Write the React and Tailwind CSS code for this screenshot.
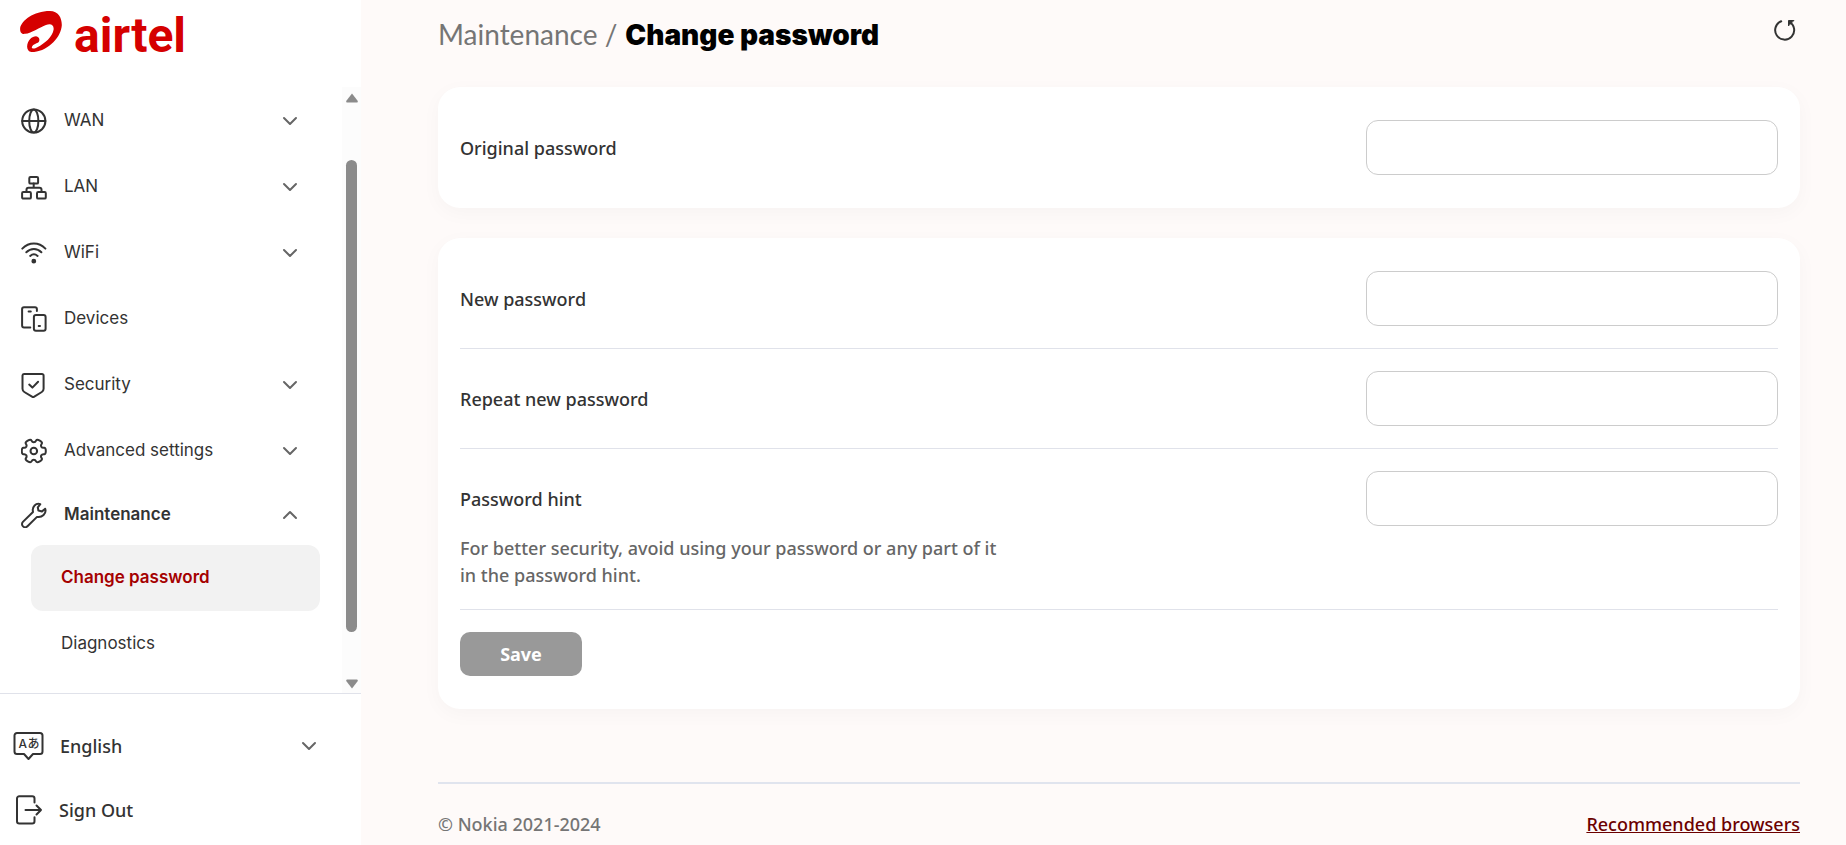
import React, { useState } from 'react';
import { ChevronDown, ChevronUp } from 'lucide-react';

const Icon = ({ children }) => (
  <svg
    viewBox="0 0 26 26"
    className="size-[26px] shrink-0"
    fill="none"
    stroke="#333333"
    strokeWidth="2"
    strokeLinecap="round"
    strokeLinejoin="round"
    aria-hidden="true"
  >
    {children}
  </svg>
);

const GlobeIcon = () => (
  <Icon>
    <circle cx="12.8" cy="13" r="11.6" />
    <ellipse cx="12.8" cy="13" rx="4.6" ry="11.6" />
    <path d="M1.2 13h23.2" />
  </Icon>
);

const LanIcon = () => (
  <Icon>
    <rect x="8.3" y="3" width="8.8" height="6.6" rx="1.2" />
    <rect x="1.1" y="18" width="8.8" height="6.6" rx="1.2" />
    <rect x="16" y="18" width="8.8" height="6.6" rx="1.2" />
    <path d="M12.7 9.6v4.2M5.5 18v-2.2a2 2 0 0 1 2-2h11a2 2 0 0 1 2 2V18" />
  </Icon>
);

const WifiIcon = () => (
  <Icon>
    <path d="M1.3 8.6C8 1.8 17.8 1.8 24.4 8.6" />
    <path d="M5.3 12.3c4.4-4.3 10.8-4.3 15.1 0" />
    <path d="M9.2 15.9c2.2-2 5.2-2 7.4 0" />
    <circle cx="12.8" cy="21.2" r="1.4" fill="#333333" />
  </Icon>
);

const DevicesIcon = () => (
  <Icon>
    <path d="M9.3 21.4H3a1.9 1.9 0 0 1-1.9-1.9V3A1.9 1.9 0 0 1 3 1.2h11A1.9 1.9 0 0 1 15.900 3v2" />
    <path d="M7.600 5.500h2.200M17.700 19.900h1.300" />
    <rect x="12.900" y="9" width="11.700" height="15.800" rx="2" />
  </Icon>
);

const ShieldIcon = () => (
  <Icon>
    <path d="M3 1.900h18a1.600 1.600 0 0 1 1.600 1.600v13.300c0 1.400-.600 2.500-1.800 3.200l-7.500 4.600a2.200 2.200 0 0 1-2.300 0L3.300 20c-1.200-.700-1.800-1.800-1.800-3.200V3.500A1.600 1.600 0 0 1 3 1.900z" />
    <path d="M8.200 12.600l3.200 3 5.700-5.900" />
  </Icon>
);

// six rounded teeth, smoothed through the midpoints between corners
const gearPath = (() => {
  const corners = [];
  for (let tooth = 0; tooth < 6; tooth++) {
    [[-16, 12.5], [16, 12.5], [20, 8.8], [40, 8.8]].forEach(([deg, r]) => {
      const a = ((tooth * 60 + deg) * Math.PI) / 180;
      corners.push([12.8 + r * Math.cos(a), 13 + r * Math.sin(a)]);
    });
  }
  const mid = (p, q) => `${((p[0] + q[0]) / 2).toFixed(2)} ${((p[1] + q[1]) / 2).toFixed(2)}`;
  const start = mid(corners[corners.length - 1], corners[0]);
  const curves = corners.map((p, i) => `Q${p[0].toFixed(2)} ${p[1].toFixed(2)} ${mid(p, corners[(i + 1) % corners.length])}`);
  return `M${start}${curves.join('')}Z`;
})();

const GearIcon = () => (
  <Icon>
    <path d={gearPath} />
    <circle cx="12.8" cy="13" r="3.3" />
  </Icon>
);

const WrenchIcon = () => (
  <Icon>
    <path d="M19.300 2.200C15 .8 10.800 4.500 12 10L1.900 19.900a3.100 3.100 0 0 0 4.600 4.400L16 14.900c5 1.100 9.800-3.400 8.200-8.100L21 9.400l-3.600-.8-.6-3.200z" />
  </Icon>
);

const Logo = () => (
  <div className="flex items-baseline gap-3 text-[#d50000]">
    <svg viewBox="0 0 126 124" className="h-[41px] w-[42px]" fill="currentColor" aria-hidden="true">
      <path d="M15 69C2 72-1 60 0 51 4 30 40 0 90 0c25 0 36 20 36 42-2 36-38 76-84 82-14 2-21-6-21-17 1-19 15-31 27-31 9 1 13 10 8 18-6 6-16 4-21 16 1 6 10 4 17 0 23-12 46-32 49-53 2-15-8-21-23-15-18 6-43 25-63 27z" />
    </svg>
    <span className="font-[Roboto] text-5xl font-bold">airtel</span>
  </div>
);

const menu = [
  { name: 'WAN', icon: GlobeIcon, expandable: true },
  { name: 'LAN', icon: LanIcon, expandable: true },
  { name: 'WiFi', icon: WifiIcon, expandable: true },
  { name: 'Devices', icon: DevicesIcon },
  { name: 'Security', icon: ShieldIcon, expandable: true },
  { name: 'Advanced settings', icon: GearIcon, expandable: true },
];

const Sidebar = () => (
  <aside className="sticky top-0 flex h-screen w-[361px] shrink-0 flex-col bg-white text-[#333333]">
    <div className="flex h-[87px] shrink-0 items-start pl-5 pt-[11px]">
      <Logo />
    </div>

    <div className="flex min-h-0 flex-1 border-b border-[#e0e2ea]">
      <nav className="min-w-0 flex-1 overflow-hidden pt-px pr-[22px] font-[Inter] text-[17px]">
        {menu.map(({ name, icon: ItemIcon, expandable }) => (
          <button key={name} type="button" className="flex h-[66px] w-full items-center pl-[21px] pr-[18px] text-left">
            <ItemIcon />
            <span className="ml-[17px] flex-1">{name}</span>
            {expandable && <ChevronDown size={24} strokeWidth={2} color="#666666" />}
          </button>
        ))}
        <button type="button" aria-expanded="true" className="flex h-[61px] w-full items-center pl-[21px] pr-[18px] text-left font-semibold">
          <WrenchIcon />
          <span className="ml-[17px] flex-1">Maintenance</span>
          <ChevronUp size={24} strokeWidth={2} color="#666666" />
        </button>
        <div className="pl-[31px]">
          <a href="#change-password" className="flex h-[66px] items-center rounded-xl bg-[#f2f2f2] pl-[30px] font-semibold text-[#a50000]">
            Change password
          </a>
          <a href="#diagnostics" className="flex h-[66px] items-center pl-[30px]">
            Diagnostics
          </a>
        </div>
      </nav>

      <div className="flex w-[19px] flex-col items-center bg-[#fcfcfc] pt-1.5 pb-1" aria-hidden="true">
        <svg viewBox="0 0 12 10" className="h-2.5 w-3" fill="#8b8b8b">
          <path d="M6 0.500 L11.800 8 Q12 9.500 11 9.500 H1 Q0 9.500 .200 8z" />
        </svg>
        <div className="flex w-full flex-1 flex-col items-center pt-[57px] pb-[47px]">
          <div className="w-[11px] flex-1 rounded-full bg-[#8b8b8b]" />
        </div>
        <svg viewBox="0 0 12 10" className="h-2.5 w-3" fill="#8b8b8b">
          <path d="M6 9.500 L11.800 2 Q12 .500 11 .500 H1 Q0 .500 .200 2z" />
        </svg>
      </div>
    </div>

    <div className="flex h-[151px] shrink-0 flex-col gap-6 pt-8 text-lg font-medium">
      <label className="flex h-10 items-center pl-[13px] pr-10">
        <svg viewBox="0 0 31 30" className="h-[30px] w-[31px]" fill="none" stroke="#333333" strokeWidth="2" strokeLinejoin="round" aria-hidden="true">
          <path d="M4 2h23a2.500 2.500 0 0 1 2.500 2.500v16A2.500 2.500 0 0 1 27 23h-7l-4.500 5-4.500-5H4a2.500 2.500 0 0 1-2.500-2.500v-16A2.500 2.500 0 0 1 4 2z" />
          <text x="5.500" y="17" fontSize="12" fontWeight="500" fontFamily="Inter, 'Noto Sans CJK JP', sans-serif" fill="#333333" stroke="none">A</text>
          <text x="14.500" y="17" fontSize="12" fontWeight="500" fontFamily="'Noto Sans CJK JP', sans-serif" fill="#333333" stroke="none">あ</text>
        </svg>
        <select aria-label="Language" className="ml-4 flex-1 appearance-none bg-transparent">
          <option>English</option>
        </select>
        <ChevronDown size={24} strokeWidth={2} color="#666666" />
      </label>
      <button type="button" className="flex h-10 items-center pl-[15px] text-left">
        <svg viewBox="0 0 28 30" className="h-[30px] w-7" fill="none" stroke="#333333" strokeWidth="2" strokeLinecap="round" strokeLinejoin="round" aria-hidden="true">
          <path d="M19.500 7.500V3.500A2.300 2.300 0 0 0 17.200 1.200H4.300A2.300 2.300 0 0 0 2 3.500v22.800a2.300 2.300 0 0 0 2.300 2.300h12.900a2.300 2.300 0 0 0 2.300-2.300v-4" />
          <path d="M10.500 15H26M21.500 10.500L26 15l-4.500 4.500" />
        </svg>
        <span className="ml-4">Sign Out</span>
      </button>
    </div>
  </aside>
);

const Card = ({ children }) => (
  <section className="rounded-[22px] bg-white px-[22px] py-[33px] shadow-[0_5px_20px_rgba(0,0,0,0.03)]">
    {children}
  </section>
);

const PasswordField = ({ id, label, value, onChange }) => (
  <div className="flex items-center justify-between">
    <label htmlFor={id}>{label}</label>
    <input
      id={id}
      type={id === 'hint' ? 'text' : 'password'}
      value={value}
      onChange={onChange}
      className="h-[55px] w-[412px] rounded-xl border border-[#cccccc] bg-white px-4 outline-none"
    />
  </div>
);

const App = () => {
  const [form, setForm] = useState({ original: '', password: '', repeat: '', hint: '' });

  const field = (id) => ({
    id,
    value: form[id],
    onChange: (e) => setForm({ ...form, [id]: e.target.value }),
  });

  return (
    <div className="flex min-h-screen bg-[#fefaf9] font-['Noto_Sans',sans-serif] text-[#333333]">
      <Sidebar />

      <main className="min-w-0 flex-1 pl-[77px] pr-[46px]">
        <header className="flex h-[87px] items-start justify-between pt-3.5">
          <h1 className="flex items-baseline gap-2 text-[28px] leading-10">
            <span className="font-[Lato] text-[#757575]">Maintenance /</span>
            <span className="font-[Inter] font-black text-black">Change password</span>
          </h1>
          <button type="button" aria-label="Refresh" className="mt-[5px] mr-1">
            <svg viewBox="0 0 22 22" className="size-[22px]" fill="none" stroke="#333333" strokeWidth="2" strokeLinecap="round" aria-hidden="true">
              <path d="M7.200 2.300a9.500 9.500 0 1 0 8.200.600" />
              <path d="M19.500 1.500h-5v5z" fill="#333333" strokeWidth="1" />
            </svg>
          </button>
        </header>

        <form className="flex flex-col gap-[30px] text-lg font-medium" onSubmit={(e) => e.preventDefault()}>
          <Card>
            <PasswordField label="Original password" {...field('original')} />
          </Card>

          <Card>
            <div className="border-b border-[#e0e2ea] pb-[22px]">
              <PasswordField label="New password" {...field('password')} />
            </div>
            <div className="border-b border-[#e0e2ea] py-[22px]">
              <PasswordField label="Repeat new password" {...field('repeat')} />
            </div>
            <div className="border-b border-[#e0e2ea] pt-[22px] pb-5">
              <PasswordField label="Password hint" {...field('hint')} />
              <p className="mt-[9px] w-[548px] leading-[27px] text-[#666666]">
                For better security, avoid using your password or any part of it in the password hint.
              </p>
            </div>
            <button type="submit" className="mt-[22px] block h-11 w-[122px] rounded-[10px] bg-[#999999] font-bold text-white">
              Save
            </button>
          </Card>
        </form>

        <footer className="mt-[73px] flex items-center justify-between border-t-2 border-[#e0e4ee] pt-[27px] pb-1.5 text-lg leading-[27px] font-medium">
          <span className="text-[#757575]">© Nokia 2021-2024</span>
          <a href="#browsers" className="text-[#6b0000] underline">Recommended browsers</a>
        </footer>
      </main>
    </div>
  );
};

export default App;
